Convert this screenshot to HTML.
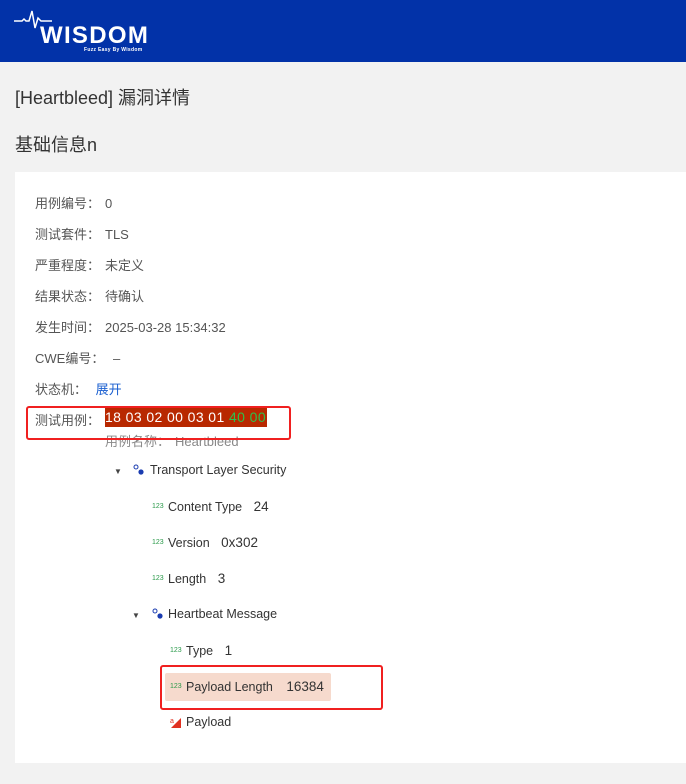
<!DOCTYPE html><html><head><meta charset="utf-8"><style>
body{margin:0;width:686px;height:784px;background:#f2f2f2;font-family:"Liberation Sans","Noto Sans CJK SC",sans-serif;position:relative;overflow:hidden;color:#333}
.hd{position:absolute;left:0;top:0;width:686px;height:62px;background:#0232a8}
.a{position:absolute;white-space:nowrap}
.card{position:absolute;left:15px;top:172px;width:671px;height:591px;background:#fff}
.l{font-size:13px;color:#555}
.l b{font-weight:normal;display:inline-block;width:5px}
.t{font-size:12.5px;color:#333}
.n{font-size:7px;color:#2a9a4a}
</style></head><body>
<div class="hd">
<svg class="a" style="left:14px;top:8px" width="40" height="22"><polyline points="0,13 8,13 10,11 12,13 15,13 18,3 21,20 24,10 27,13 38,13" fill="none" stroke="#fff" stroke-width="1.5"/></svg>
<div class="a" style="left:40px;top:22px;font-size:24px;font-weight:bold;color:#fff;letter-spacing:1.3px">WISDOM</div>
<div class="a" style="left:84px;top:47px;font-size:5px;color:#fff;font-weight:bold;letter-spacing:0.3px">Fuzz Easy By Wisdom</div>
</div>
<div class="a" style="left:15px;top:84px;font-size:18px;color:#333">[Heartbleed] 漏洞详情</div>
<div class="a" style="left:15px;top:131px;font-size:18px;color:#333">基础信息n</div>
<div class="card"></div>
<div class="a l" style="left:35px;top:193px">用例编号：<b></b>0</div>
<div class="a l" style="left:35px;top:224px">测试套件：<b></b>TLS</div>
<div class="a l" style="left:35px;top:255px">严重程度：<b></b>未定义</div>
<div class="a l" style="left:35px;top:286px">结果状态：<b></b>待确认</div>
<div class="a l" style="left:35px;top:317px">发生时间：<b></b>2025-03-28 15:34:32</div>
<div class="a l" style="left:35px;top:348px">CWE编号：<b></b> –</div>
<div class="a l" style="left:35px;top:379px">状态机：<b></b> <span style="color:#1a5fd0">展开</span></div>
<div class="a l" style="left:35px;top:410px">测试用例：</div>
<div class="a" style="left:105px;top:408px;width:162px;height:19px;background:#b82800"></div>
<div class="a" style="left:105px;top:409px;font-size:14px;color:#fff;letter-spacing:0.4px">18 03 02 00 03 01 <span style="color:#2ec04a">40 00</span></div>
<div class="a l" style="left:105px;top:431px;color:#888">用例名称：<b></b>Heartbleed</div>
<div class="a" style="left:26px;top:406px;width:265px;height:34px;border:2px solid #f02020;border-radius:3px;box-sizing:border-box"></div>
<div class="a" style="left:114px;top:467px;font-size:8px;color:#444">▼</div>
<svg class="a" style="left:133px;top:464px" width="12" height="12"><circle cx="3" cy="3" r="2" fill="none" stroke="#1a3cb0"/><circle cx="8" cy="8" r="2.6" fill="#1a3cb0"/></svg>
<div class="a t" style="left:150px;top:463px">Transport Layer Security</div>
<div class="a n" style="left:152px;top:503px">123</div><div class="a t" style="left:168px;top:499px">Content Type <span style="margin-left:8px;font-size:13.5px">24</span></div>
<div class="a n" style="left:152px;top:539px">123</div><div class="a t" style="left:168px;top:535px">Version <span style="margin-left:8px;font-size:13.5px">0x302</span></div>
<div class="a n" style="left:152px;top:575px">123</div><div class="a t" style="left:168px;top:571px">Length <span style="margin-left:8px;font-size:13.5px">3</span></div>
<div class="a" style="left:132px;top:611px;font-size:8px;color:#444">▼</div>
<svg class="a" style="left:152px;top:608px" width="12" height="12"><circle cx="3" cy="3" r="2" fill="none" stroke="#1a3cb0"/><circle cx="8" cy="8" r="2.6" fill="#1a3cb0"/></svg>
<div class="a t" style="left:168px;top:607px">Heartbeat Message</div>
<div class="a n" style="left:170px;top:647px">123</div><div class="a t" style="left:186px;top:643px">Type <span style="margin-left:8px;font-size:13.5px">1</span></div>
<div class="a" style="left:165px;top:673px;width:166px;height:28px;background:#f6dacd;border-radius:2px"></div>
<div class="a n" style="left:170px;top:683px">123</div><div class="a t" style="left:186px;top:679px">Payload Length <span style="margin-left:10px;font-size:13.5px">16384</span></div>
<div class="a" style="left:160px;top:665px;width:223px;height:45px;border:2px solid #f02020;border-radius:3px;box-sizing:border-box"></div>
<svg class="a" style="left:170px;top:717px" width="12" height="12"><polygon points="1,11 11,1 11,11" fill="#e03020"/><text x="0" y="6" font-size="7" fill="#e03020">a</text></svg>
<div class="a t" style="left:186px;top:715px">Payload</div>
</body></html>
